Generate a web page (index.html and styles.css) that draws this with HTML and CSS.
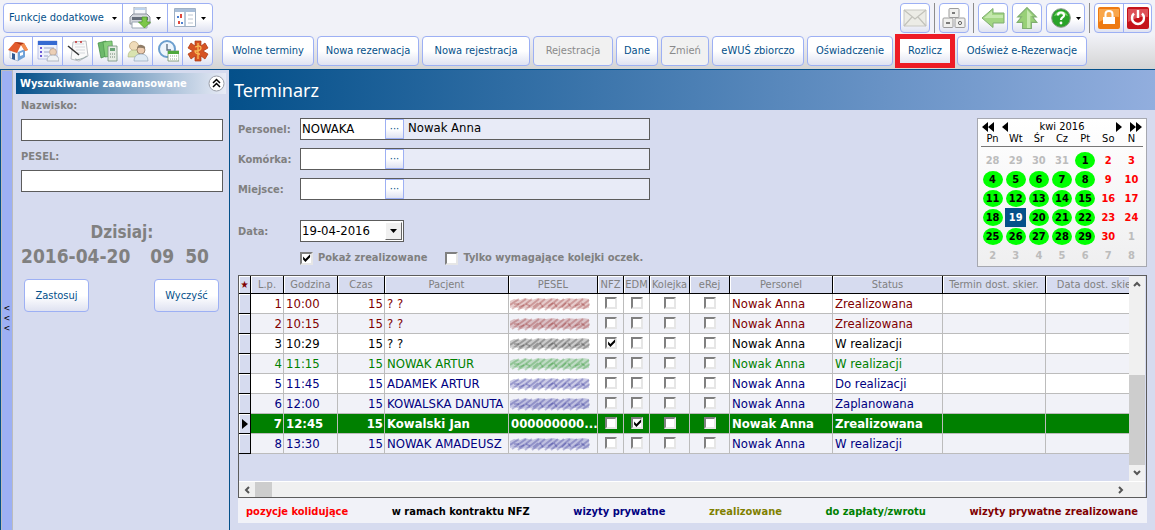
FILE: index.html
```html
<!DOCTYPE html>
<html lang="pl">
<head>
<meta charset="utf-8">
<title>Terminarz</title>
<link rel="stylesheet" href="styles.css">
</head>
<body>
<svg class="defs" aria-hidden="true">
  <symbol id="scribble" viewBox="0 0 80 16">
    <path d="M0 5l4-2 6 1 5-2 7 2 6-2 8 1 7-1 8 2 7-2 8 1 7-1 6 1v9l-6 1-8-1-7 1-8-1-7 1-9-1-8 1-8-1-7 1-7-2-4 1z" fill="currentColor" opacity=".2"/>
    <path d="M0 9L9 3M2 13L16 3M8 14L22 3M15 14L29 3M22 14L35 3M28 14L42 3M35 14L48 3M41 14L54 3M47 14L60 3M53 14L67 3M60 14L73 3M66 14L79 4M73 13L80 8" stroke="currentColor" stroke-width="2" opacity=".24"/>
    <path d="M4 8l5 0M9 11l5-2M16 8l4 2M23 11l5-4M30 7l3 4M38 10l5-3M44 7l3 4M52 11l4-4M58 7l3 4M65 10l5-2M71 7l4 3" stroke="currentColor" stroke-width="1.6" opacity=".24"/>
  </symbol>
  <symbol id="drop" viewBox="0 0 5 3"><path d="M0 0h5L2.500 3z" fill="#000"/></symbol>
</svg>

<header class="toolbar">
  <div class="bar">
    <div class="group">
      <button class="tool menu">Funkcje dodatkowe <svg class="caret"><use href="#drop"/></svg></button>
      <button class="tool split" aria-label="Drukuj">
        <svg class="icon" viewBox="0 0 22 22"><path d="M5 0h12v8H5z" fill="#f6f8fb" stroke="#9aa6b4"/><path d="M6 1h10v2H6z" fill="#bcd3ec"/><path d="M1 10l3-3h14l3 3v7H1z" fill="#d3d6dc" stroke="#8d939d"/><path d="M3 10h16v3H3z" fill="#656d79"/><path d="M3 15h15v6H3z" fill="#fff" stroke="#9aa6b4"/><path d="M13 10h5v5h3.500l-6 6-6-6H13z" fill="#7cc74a" stroke="#4a9527" stroke-width=".7"/></svg>
        <svg class="caret"><use href="#drop"/></svg>
      </button>
      <button class="tool split" aria-label="Widok">
        <svg class="icon" viewBox="0 0 22 22"><path d="M.5 1.500h21v18H.5z" fill="#fff" stroke="#9fb0c4"/><path d="M1 2h20v3H1z" fill="#a9bfd9"/><path d="M10 5h2v14h-2z" fill="#b6c6d8"/><path d="M3 9h2v2H3zM7 15h2v2H7z" fill="#4d7fd0"/><path d="M6 7h2v4H6zM4 14h2v3H4z" fill="#e0473c"/><path d="M14 8h5M14 12h5M14 16h5" stroke="#bcc5d0"/></svg>
        <svg class="caret"><use href="#drop"/></svg>
      </button>
    </div>
    <div class="right">
      <div class="group"><button class="tool sq" aria-label="Poczta"><svg class="icon wide" viewBox="0 0 24 18"><path d="M1 1h22v16H1z" fill="#ecece6" stroke="#c8c8c2"/><path d="M1 1l11 9L23 1M1 17l8-9M23 17l-8-9" fill="none" stroke="#c2c2bb" stroke-width="1.200"/></svg></button></div>
      <span class="rule"></span>
      <div class="group"><button class="tool sq" aria-label="Klawiatura"><svg class="icon wide" viewBox="0 0 24 20"><g fill="#f0f0ee" stroke="#9c9c9c"><rect x="7" y="0.500" width="10" height="9" rx="1"/><rect x="1" y="10" width="10" height="9.500" rx="1"/><rect x="13" y="10" width="10" height="9.500" rx="1"/></g><path d="M10 5h3M4 15h4" stroke="#555" stroke-width="1.500"/><circle cx="18" cy="15" r="1.600" fill="none" stroke="#666"/></svg></button></div>
      <span class="rule"></span>
      <div class="group"><button class="tool sq" aria-label="Wstecz"><svg class="icon wide" viewBox="0 0 24 20"><path d="M1 10L12 .5V5h11v10H12v4.500z" fill="#a3d684" stroke="#7fae70"/><path d="M3 10l8-7v4h11v3z" fill="#c4e8ad"/></svg></button></div>
      <div class="group"><button class="tool sq" aria-label="W górę"><svg class="icon" viewBox="0 0 20 20"><path d="M10 .5L18.500 9H15l4 5h-5v5.500H6V14H1l4-5H1.500z" fill="#98d077" stroke="#7fae70"/><path d="M10 2.500L15 8h-2v11h-3z" fill="#c4e8ad"/></svg></button></div>
      <div class="group"><button class="tool help" aria-label="Pomoc"><svg class="icon" viewBox="0 0 20 20"><circle cx="10" cy="10" r="9.300" fill="#29a329" stroke="#8a978a"/><path d="M3 8a7.500 7.500 0 0 1 14 0q-7-3-14 0" fill="#7bd36a"/><path d="M7 7.500q0-3 3-3t3 2.700q0 1.300-1.500 2.200-1.500 1-1.500 2.600" fill="none" stroke="#fff" stroke-width="2.200"/><circle cx="10" cy="15" r="1.400" fill="#fff"/></svg><svg class="caret"><use href="#drop"/></svg></button></div>
      <span class="rule"></span>
      <div class="group"><button class="tool sq" aria-label="Zablokuj"><svg class="icon big" viewBox="0 0 22 22"><rect width="22" height="22" rx="2" fill="#ee7a12"/><path d="M1 2h20v8Q11 9 1 15z" fill="#f9a64a"/><path d="M7.500 10V7q0-3 3.500-3t3.500 3v3" fill="none" stroke="#fff" stroke-width="2"/><path d="M5 10h12v7H5z" fill="#fff"/></svg></button><button class="tool sq" aria-label="Wyłącz"><svg class="icon big" viewBox="0 0 22 22"><rect width="22" height="22" rx="2" fill="#c5131b"/><path d="M1 2h20v8Q11 9 1 15z" fill="#dd5057"/><path d="M7 6.500a6 6 0 1 0 8 0" fill="none" stroke="#fff" stroke-width="2.400"/><path d="M11 3v8" stroke="#fff" stroke-width="2.400"/></svg></button></div>
    </div>
  </div>
  <div class="bar">
    <div class="group shortcuts">
      <button class="tool sq" aria-label="Start"><svg class="icon" viewBox="0 0 22 22"><path d="M3 10l8 2v9l-8-3z" fill="#f4f6fa" stroke="#8ba3bd" stroke-width=".6"/><path d="M11 12l7-3v8l-7 4z" fill="#6fa2d8"/><path d="M5 13l3 1v6l-3-1z" fill="#315a92"/><path d="M13 13l3-1v3l-3 1z" fill="#fff"/><path d="M8 2l9 1 4 7-3 1-4-6-4 8-9-3z" fill="#e25b2c"/><path d="M8 2l9 1-3 2z" fill="#a93212"/><path d="M14 5l3-2 4 7-3 1z" fill="#f28c4e"/></svg></button>
      <button class="tool sq" aria-label="Rejestr"><svg class="icon" viewBox="0 0 22 22"><path d="M1 1h19v18H1z" fill="#eef1fb" stroke="#9daade" stroke-width=".7"/><path d="M1 1h19v4H1z" fill="#3569d1"/><path d="M3 8h2M3 12h2M3 16h2" stroke="#6c5ad8" stroke-width="2"/><path d="M7 8h10M7 12h5M7 16h4" stroke="#9aa4c9"/><circle cx="16" cy="12" r="3.500" fill="#eccfb6" stroke="#a58e80" stroke-width=".6"/><path d="M10 21q0-6 6-6t6 6z" fill="#eff2f5" stroke="#9ba4b0" stroke-width=".7"/></svg></button>
      <button class="tool sq" aria-label="Notatki"><svg class="icon" viewBox="0 0 22 22"><path d="M6 2l13-1 2 15-9 5-8-2z" fill="#fafafa" stroke="#a9adb3" stroke-width=".8"/><path d="M8 4h9M8 7h10M9 10h9M10 13h8" stroke="#d5d8dd"/><circle cx="9" cy="2" r="1" fill="#c62c2c"/><circle cx="14" cy="2" r="1" fill="#c62c2c"/><path d="M1 6l11 9" stroke="#333" stroke-width="1.600"/><path d="M8 19q4 2 12-3" stroke="#9aa" fill="none"/></svg></button>
      <button class="tool sq" aria-label="Rozliczenia"><svg class="icon" viewBox="0 0 22 22"><path d="M1 3l8-2 3 14-8 3z" fill="#6cb86a" stroke="#3f8a45" stroke-width=".7"/><path d="M6 2l9-1 1 15-8 1z" fill="#88cf7d" stroke="#4b964c" stroke-width=".7"/><path d="M11 6h9v15h-9z" fill="#e7ede5" stroke="#71907a" stroke-width=".8"/><path d="M13 8h5v3h-5z" fill="#6aa577"/><path d="M13 14h5M13 17h5" stroke="#708577" stroke-dasharray="1 1"/></svg></button>
      <button class="tool sq" aria-label="Pacjenci"><svg class="icon" viewBox="0 0 22 22"><circle cx="7" cy="6" r="4.500" fill="#f0dcba" stroke="#b9a07a" stroke-width=".7"/><path d="M1 17q0-7 6-7t6 7z" fill="#d9e3b0" stroke="#a9b27c" stroke-width=".6"/><circle cx="14" cy="10" r="4" fill="#eccbae" stroke="#8b7158" stroke-width=".8"/><path d="M7 21q0-7 7-7t7 7z" fill="#dfeaf4" stroke="#95a9ba" stroke-width=".7"/><path d="M10 8q1-4 5-3t3 4q-3-2-8-1" fill="#8f7c66"/></svg></button>
      <button class="tool sq" aria-label="Grafik"><svg class="icon" viewBox="0 0 22 22"><circle cx="10" cy="9" r="8" fill="#edf5fc" stroke="#6c9fce" stroke-width="2"/><path d="M10 4v6h4" fill="none" stroke="#586b7e" stroke-width="1.300"/><path d="M11 11h11v10H11z" fill="#fff" stroke="#709064" stroke-width=".8"/><path d="M11 11h11v3H11z" fill="#4fa83c"/><path d="M13 16h7M13 19h7" stroke="#93a88c" stroke-dasharray="1 1"/></svg></button>
      <button class="tool sq" aria-label="Medycyna"><svg class="icon" viewBox="0 0 22 22"><path d="M8 1h6v5l4-3 3 5-5 3 5 3-3 5-4-3v5H8v-5l-4 3-3-5 5-3-5-3 3-5 4 3z" fill="#d65423" stroke="#a8350e" stroke-width=".7"/><path d="M11 3v16M8 7q6-2 6 1t-6 3q0 3 5 3" fill="none" stroke="#f8bb55" stroke-width="1.300"/></svg></button>
    </div>
    <nav class="actions">
      <button class="btn w92">Wolne terminy</button>
      <button class="btn w102">Nowa rezerwacja</button>
      <button class="btn w108">Nowa rejestracja</button>
      <button class="btn w80" disabled>Rejestracja</button>
      <button class="btn w42">Dane</button>
      <button class="btn w48" disabled>Zmień</button>
      <button class="btn w92">eWUŚ zbiorczo</button>
      <button class="btn w86">Oświadczenie</button>
      <button class="btn marked">Rozlicz</button>
      <button class="btn w130">Odśwież e-Rezerwacje</button>
    </nav>
  </div>
</header>

<div class="body">
  <button class="strip" aria-label="Zwiń panel"><span>&lt;</span><span>&lt;</span><span>&lt;</span></button>
  <aside class="side">
    <div class="side-head"><h2>Wyszukiwanie zaawansowane</h2>
      <button class="round" aria-label="Zwiń"><svg viewBox="0 0 17 17"><circle cx="8.500" cy="8.500" r="7.500" fill="#fff" stroke="#9a9ea8"/><path d="M5 8l3.500-3.500L12 8M5 12l3.500-3.500L12 12" fill="none" stroke="#000" stroke-width="1.500"/></svg></button>
    </div>
    <form class="search">
      <label for="nazwisko">Nazwisko:</label>
      <input id="nazwisko" type="text">
      <label for="pesel">PESEL:</label>
      <input id="pesel" type="text">
      <div class="today"><p>Dzisiaj:</p><p class="now"><span>2016-04-20</span><span>09</span><span>50</span></p></div>
      <div class="pair"><button type="button" class="btn low">Zastosuj</button><button type="button" class="btn low">Wyczyść</button></div>
    </form>
  </aside>

  <main class="main">
    <h1>Terminarz</h1>
    <div class="content">
      <div class="top">
        <form class="filters">
          <div class="line"><label for="personel">Personel:</label><div class="lookup"><input id="personel" type="text" value="NOWAKA"><button type="button" aria-label="Wybierz personel">···</button><output>Nowak Anna</output></div></div>
          <div class="line"><label for="komorka">Komórka:</label><div class="lookup"><input id="komorka" type="text"><button type="button" aria-label="Wybierz komórkę">···</button><output></output></div></div>
          <div class="line"><label for="miejsce">Miejsce:</label><div class="lookup"><input id="miejsce" type="text"><button type="button" aria-label="Wybierz miejsce">···</button><output></output></div></div>
          <div class="line date"><label for="data">Data:</label><div class="combo"><select id="data"><option>19-04-2016</option></select><span class="knob"><svg viewBox="0 0 7 4"><path d="M0 0h7L3.500 4z"/></svg></span></div></div>
          <div class="checks"><label><input type="checkbox" checked>Pokaż zrealizowane</label><label><input type="checkbox">Tylko wymagające kolejki oczek.</label></div>
        </form>
        <section class="calendar" aria-label="Kalendarz">
          <div class="month">
            <button aria-label="Poprzedni rok"><svg viewBox="0 0 12 10"><path d="M6 0v10L0 5zM12 0v10L6 5z"/></svg></button>
            <button aria-label="Poprzedni miesiąc"><svg class="one" viewBox="0 0 6 10"><path d="M6 0v10L0 5z"/></svg></button>
            <span>kwi 2016</span>
            <button aria-label="Następny miesiąc"><svg class="one" viewBox="0 0 6 10"><path d="M0 0v10l6-5z"/></svg></button>
            <button aria-label="Następny rok"><svg viewBox="0 0 12 10"><path d="M0 0v10l6-5zM6 0v10l6-5z"/></svg></button>
          </div>
          <table class="days">
            <thead><tr><th>Pn</th><th>Wt</th><th>Śr</th><th>Cz</th><th>Pt</th><th>So</th><th>N</th></tr></thead>
            <tbody>
              <tr><td class="off">28</td><td class="off">29</td><td class="off">30</td><td class="off">31</td><td><b>1</b></td><td class="free">2</td><td class="free">3</td></tr>
              <tr><td><b>4</b></td><td><b>5</b></td><td><b>6</b></td><td><b>7</b></td><td><b>8</b></td><td class="free">9</td><td class="free">10</td></tr>
              <tr><td><b>11</b></td><td><b>12</b></td><td><b>13</b></td><td><b>14</b></td><td><b>15</b></td><td class="free">16</td><td class="free">17</td></tr>
              <tr><td><b>18</b></td><td><b class="sel">19</b></td><td><b>20</b></td><td><b>21</b></td><td><b>22</b></td><td class="free">23</td><td class="free">24</td></tr>
              <tr><td><b>25</b></td><td><b>26</b></td><td><b>27</b></td><td><b>28</b></td><td><b>29</b></td><td class="free">30</td><td class="off">1</td></tr>
              <tr><td class="off">2</td><td class="off">3</td><td class="off">4</td><td class="off">5</td><td class="off">6</td><td class="off">7</td><td class="off">8</td></tr>
            </tbody>
          </table>
        </section>
      </div>

      <div class="gridbox">
        <div class="viewport">
          <table class="grid">
            <colgroup><col class="c12"><col class="c33"><col class="c54"><col class="c47"><col class="c124"><col class="c89"><col class="c26"><col class="c26"><col class="c40"><col class="c40"><col class="c103"><col class="c110"><col class="c103"><col class="c103"></colgroup>
            <thead><tr><th class="star">★</th><th>L.p.</th><th>Godzina</th><th>Czas</th><th>Pacjent</th><th>PESEL</th><th>NFZ</th><th>EDM</th><th>Kolejka</th><th>eRej</th><th>Personel</th><th>Status</th><th>Termin dost. skier.</th><th>Data dost. skier.</th></tr></thead>
            <tbody>
              <tr class="maroon"><td class="mark"></td><td class="num">1</td><td>10:00</td><td class="num">15</td><td>? ?</td><td><svg class="hid"><use href="#scribble"/></svg></td><td class="chk"><input type="checkbox" aria-label="NFZ"></td><td class="chk"><input type="checkbox" aria-label="EDM"></td><td class="chk"><input type="checkbox" aria-label="Kolejka"></td><td class="chk"><input type="checkbox" aria-label="eRej"></td><td>Nowak Anna</td><td>Zrealizowana</td><td></td><td></td></tr>
              <tr class="maroon"><td class="mark"></td><td class="num">2</td><td>10:15</td><td class="num">15</td><td>? ?</td><td><svg class="hid"><use href="#scribble"/></svg></td><td class="chk"><input type="checkbox" aria-label="NFZ"></td><td class="chk"><input type="checkbox" aria-label="EDM"></td><td class="chk"><input type="checkbox" aria-label="Kolejka"></td><td class="chk"><input type="checkbox" aria-label="eRej"></td><td>Nowak Anna</td><td>Zrealizowana</td><td></td><td></td></tr>
              <tr class="black"><td class="mark"></td><td class="num">3</td><td>10:29</td><td class="num">15</td><td>? ?</td><td><svg class="hid"><use href="#scribble"/></svg></td><td class="chk"><input type="checkbox" checked aria-label="NFZ"></td><td class="chk"><input type="checkbox" aria-label="EDM"></td><td class="chk"><input type="checkbox" aria-label="Kolejka"></td><td class="chk"><input type="checkbox" aria-label="eRej"></td><td>Nowak Anna</td><td>W realizacji</td><td></td><td></td></tr>
              <tr class="green"><td class="mark"></td><td class="num">4</td><td>11:15</td><td class="num">15</td><td>NOWAK ARTUR</td><td><svg class="hid"><use href="#scribble"/></svg></td><td class="chk"><input type="checkbox" aria-label="NFZ"></td><td class="chk"><input type="checkbox" aria-label="EDM"></td><td class="chk"><input type="checkbox" aria-label="Kolejka"></td><td class="chk"><input type="checkbox" aria-label="eRej"></td><td>Nowak Anna</td><td>W realizacji</td><td></td><td></td></tr>
              <tr class="navy"><td class="mark"></td><td class="num">5</td><td>11:45</td><td class="num">15</td><td>ADAMEK ARTUR</td><td><svg class="hid"><use href="#scribble"/></svg></td><td class="chk"><input type="checkbox" aria-label="NFZ"></td><td class="chk"><input type="checkbox" aria-label="EDM"></td><td class="chk"><input type="checkbox" aria-label="Kolejka"></td><td class="chk"><input type="checkbox" aria-label="eRej"></td><td>Nowak Anna</td><td>Do realizacji</td><td></td><td></td></tr>
              <tr class="navy"><td class="mark"></td><td class="num">6</td><td>12:00</td><td class="num">15</td><td>KOWALSKA DANUTA</td><td><svg class="hid"><use href="#scribble"/></svg></td><td class="chk"><input type="checkbox" aria-label="NFZ"></td><td class="chk"><input type="checkbox" aria-label="EDM"></td><td class="chk"><input type="checkbox" aria-label="Kolejka"></td><td class="chk"><input type="checkbox" aria-label="eRej"></td><td>Nowak Anna</td><td>Zaplanowana</td><td></td><td></td></tr>
              <tr class="current"><td class="mark"><svg class="pointer" viewBox="0 0 6 10"><path d="M0 0v10l6-5z"/></svg></td><td class="num">7</td><td>12:45</td><td class="num">15</td><td>Kowalski Jan</td><td>000000000...</td><td class="chk"><input type="checkbox" aria-label="NFZ"></td><td class="chk"><input type="checkbox" checked aria-label="EDM"></td><td class="chk"><input type="checkbox" aria-label="Kolejka"></td><td class="chk"><input type="checkbox" aria-label="eRej"></td><td>Nowak Anna</td><td>Zrealizowana</td><td></td><td></td></tr>
              <tr class="navy"><td class="mark"></td><td class="num">8</td><td>13:30</td><td class="num">15</td><td>NOWAK AMADEUSZ</td><td><svg class="hid"><use href="#scribble"/></svg></td><td class="chk"><input type="checkbox" aria-label="NFZ"></td><td class="chk"><input type="checkbox" aria-label="EDM"></td><td class="chk"><input type="checkbox" aria-label="Kolejka"></td><td class="chk"><input type="checkbox" aria-label="eRej"></td><td>Nowak Anna</td><td>W realizacji</td><td></td><td></td></tr>
            </tbody>
          </table>
        </div>
        <div class="vscroll">
          <button aria-label="W górę"><svg viewBox="0 0 8 6"><path d="M1 5l3-3 3 3"/></svg></button>
          <div class="track"><div class="thumb"></div></div>
          <button aria-label="W dół"><svg viewBox="0 0 8 6"><path d="M1 1l3 3 3-3"/></svg></button>
        </div>
        <div class="hscroll">
          <button aria-label="W lewo"><svg viewBox="0 0 6 8"><path d="M5 1L2 4l3 3"/></svg></button>
          <div class="track"><div class="thumb"></div></div>
          <button aria-label="W prawo"><svg viewBox="0 0 6 8"><path d="M1 1l3 3-3 3"/></svg></button>
        </div>
      </div>
      <footer class="legend">
        <span class="red">pozycje kolidujące</span><span class="black">w ramach kontraktu NFZ</span><span class="navy">wizyty prywatne</span><span class="olive">zrealizowane</span><span class="green">do zapłaty/zwrotu</span><span class="maroon">wizyty prywatne zrealizowane</span>
      </footer>
    </div>
  </main>
</div>
</body>
</html>
```
FILE: styles.css
```css
* { box-sizing: border-box; }
body { margin: 0; min-height: 100vh; display: flex; flex-direction: column; font: 13px/16px "DejaVu Sans Condensed", "Noto Sans", sans-serif; color: #000; background: #d6dbef; }
button, input, select { font: inherit; color: inherit; margin: 0; padding: 0; }
button { border: 0; background: none; }
h1, h2, p { margin: 0; }
.defs { position: absolute; width: 0; height: 0; }

/* toolbar */
.toolbar { display: flex; flex-direction: column; gap: 3px; padding: 3px; background: linear-gradient(#f1f2f8 50%, #d4d4d4); }
.bar { display: flex; justify-content: space-between; height: 30px; }
.bar + .bar { justify-content: flex-start; gap: 9px; }
.group { display: flex; border: 1px solid #9db0f4; border-radius: 4px; background: linear-gradient(#fff 55%, #dfe2f1); }
.tool, .btn { color: #04508a; white-space: nowrap; font-family: "DejaVu Sans Condensed", "Noto Sans", sans-serif; font-size: 11px; }
.tool { display: flex; align-items: center; justify-content: center; gap: 6px; }
.tool + .tool { border-left: 1px solid #9db0f4; }
.menu { width: 118px; gap: 8px; }
.split { width: 45px; }
.sq { width: 28px; }
.help { width: 37px; }
.shortcuts .sq { width: 30px; }
.shortcuts .sq:first-child { width: 28px; }
.icon { width: 22px; height: 22px; flex: none; }
.icon.wide { width: 24px; height: 20px; }
.help .icon { width: 20px; height: 20px; }
.split, .help { gap: 5px; }
.caret { width: 5px; height: 3px; flex: none; }
.right { display: flex; gap: 4px; }
.rule { width: 1px; background: #8c8c8c; }
.actions { display: flex; gap: 3px; }
.btn { height: 30px; border: 1px solid #9db0f4; border-radius: 4px; background: linear-gradient(#fff 50%, #dfe2f1); }
.btn:disabled { background: #f1f1f1; color: #8a8a8a; }
.marked { width: 56px; margin: 0 1px; outline: 5px solid #ee1c25; outline-offset: -3px; border-radius: 0; }
.w92 { width: 92px; } .w102 { width: 102px; } .w108 { width: 108px; } .w80 { width: 80px; } .w42 { width: 42px; }
.w48 { width: 48px; } .w86 { width: 86px; } .w130 { width: 130px; }

/* side panel */
.body { flex: 1; display: flex; border-top: 1px solid #04508a; border-left: 1px solid #04508a; }
.strip { width: 12px; flex: none; display: flex; flex-direction: column; align-items: center; justify-content: center; padding-top: 34px; background: #9db0f4; border: 1px solid #bcbcbc; border-bottom: 0; font-size: 9px; line-height: 10px; }
.side { width: 217px; flex: none; padding: 3px; border-right: 1px solid #04508a; }
.side-head { display: flex; align-items: center; justify-content: space-between; height: 21px; padding: 0 1px 0 4px; background: linear-gradient(90deg, #04508a, #e8ebf6); }
h2 { color: #fff; font-size: 11px; font-weight: bold; }
.round, .round svg { display: block; width: 17px; height: 17px; }
.search { display: flex; flex-direction: column; padding: 4px 3px 0 5px; }
.search label { margin: 0 0 5px; color: #808080; font-weight: bold; font-size: 11px; line-height: 16px; }
.search input { height: 22px; border: 1px solid #5c5c5c; background: #fff; margin-bottom: 8px; padding: 0 3px; }
.today { margin-top: 20px; color: #808080; font-weight: bold; font-size: 17px; line-height: 24px; text-align: center; }
.now { display: flex; font-size: 19px; justify-content: flex-start; }
.now span:nth-child(2) { margin: 0 11px 0 20px; }
.pair { display: flex; justify-content: space-between; padding: 11px 4px 0 3px; }
.low { width: 65px; height: 33px; }

/* main */
.main { flex: 1; min-width: 0; display: flex; flex-direction: column; }
h1 { height: 40px; padding-left: 4px; font: 18px/40px "Noto Sans", sans-serif; color: #fff; background: linear-gradient(90deg, #04508a, #92aede); }
.content { flex: 1; display: flex; flex-direction: column; padding: 8px 8px 7px; }
.top { display: flex; justify-content: space-between; align-items: flex-start; margin-bottom: 8px; }
.filters { width: 412px; display: flex; flex-direction: column; gap: 8px; }
.line { display: flex; align-items: center; height: 22px; }
.line label, .checks label { color: #808080; font-weight: bold; font-size: 11px; }
.line > label { width: 62px; flex: none; padding-top: 1px; }
.lookup { flex: 1; display: flex; height: 22px; border: 1px solid #5c5c5c; background: #e8ebf7; }
.lookup input { width: 84px; border: 0; padding: 0 1px; background: #fff; }
.lookup button { width: 19px; border: 1px solid #9db0f4; background: linear-gradient(#fff 50%, #dfe2f1); color: #04508a; line-height: 12px; font-size: 11px; }
.lookup output { padding-left: 4px; line-height: 18px; }
.date { margin-top: 12px; }
.combo { position: relative; width: 104px; height: 22px; border: 1px solid #5c5c5c; background: #fff; }
.combo select { appearance: none; width: 100%; height: 20px; border: 0; background: #fff; padding: 0 1px; }
.knob { position: absolute; top: 1px; right: 1px; width: 17px; height: 18px; display: grid; place-items: center; background: #f0f0f0; border: 1px solid; border-color: #fff #666 #666 #fff; pointer-events: none; }
.knob svg { width: 7px; height: 4px; }
.checks { display: flex; gap: 18px; padding-left: 62px; }
.checks label { display: flex; align-items: center; gap: 5px; white-space: nowrap; }
input[type="checkbox"] { appearance: none; display: block; width: 13px; height: 13px; flex: none; background: #fff; border: 2px solid; border-color: #808080 #e6e6e6 #e6e6e6 #808080; }
input[type="checkbox"]:checked::before { content: ""; display: block; width: 9px; height: 9px; background: #000; clip-path: polygon(12% 34%, 38% 60%, 90% 8%, 90% 42%, 38% 94%, 12% 68%); }

/* calendar */
.calendar { width: 170px; padding: 2px 3px 1px; border: 1px solid #a6a8b0; background: linear-gradient(#fff, #efeff0); font-size: 11px; }
.month { display: flex; align-items: center; gap: 8px; height: 12px; padding: 0 1px; line-height: 12px; }
.month span { flex: 1; text-align: center; }
.month svg { display: block; width: 12px; height: 10px; }
.month svg.one { width: 6px; }
.days { width: 100%; table-layout: fixed; border-collapse: collapse; }
.days th { font-weight: normal; height: 13px; padding: 0 0 1px; line-height: 11px; border-bottom: 1px solid #777; }
.days td { height: 19px; padding: 0; font-weight: bold; text-align: center; line-height: 17px; }
.days tbody::before { content: ""; display: table-row; height: 5px; }
.days b { display: block; width: 20px; height: 17px; margin: auto; border-radius: 50%; background: #0f0; }
.days b.sel { border-radius: 0; width: 21px; height: 19px; line-height: 19px; color: #fff; background: #04508a; }
.off { color: #bcbcbc; } .free { color: #f00; }

/* schedule grid */
.gridbox { flex: 1; display: grid; grid-template: 1fr 16px / minmax(0, 1fr) 16px; padding-right: 1px; border: 1px solid #5c5c5c; background: #d6dbef; }
.viewport { overflow: hidden; }
.grid { width: 910px; table-layout: fixed; border-collapse: separate; border-spacing: 0; }
.c12 { width: 12px; } .c33 { width: 33px; } .c54 { width: 54px; } .c47 { width: 47px; } .c124 { width: 124px; } .c89 { width: 89px; } .c26 { width: 26px; }
.c40 { width: 40px; } .c103 { width: 103px; } .c110 { width: 110px; }
.grid th { height: 18px; padding: 0; border: 1px solid #000; border-width: 0 1px 1px 0; box-shadow: inset 1px 1px #fff; color: #808080; font-size: 11px; font-weight: normal; line-height: 17px; white-space: nowrap; }
.grid th.star { color: #800000; font-size: 10px; }
.grid td { height: 20px; padding: 0 1px 0 2px; border: 1px solid #bcbcbc; border-width: 0 1px 1px 0; background: #fff; line-height: 19px; white-space: nowrap; overflow: hidden; }
.grid tr:nth-child(even) td { background: #f1f2f8; }
.grid tr td.mark { padding: 0; background: #d6dbef; border-color: #000; box-shadow: inset 1px 1px #fff; }
.grid .num { text-align: right; }
.grid .chk input { margin: -2px auto 0; width: 12px; height: 12px; }
.grid tr.current td:not(.mark) { background: #008000; color: #fff; font-weight: bold; }
.hid { display: block; width: 80px; height: 16px; margin-left: -1px; }
.pointer { display: block; width: 6px; height: 10px; margin-left: 3px; }
.maroon { color: #800000; } .navy { color: #000080; } .green { color: #008000; } .black { color: #000; } .olive { color: #808000; } .red { color: #f00; }

.vscroll, .hscroll { display: flex; background: #f0f0f0; }
.vscroll { flex-direction: column; }
.hscroll { grid-column: 1 / 3; padding-right: 16px; border-top: 1px solid #fff; }
.vscroll button, .hscroll button { flex: none; display: grid; place-items: center; width: 16px; height: 16px; }
.vscroll svg { width: 8px; height: 6px; } .hscroll svg { width: 6px; height: 8px; }
.vscroll path, .hscroll path { fill: none; stroke: #555; stroke-width: 2; }
.track { flex: 1; display: flex; }
.vscroll .track { flex-direction: column; justify-content: flex-end; }
.vscroll .thumb { height: 52%; }
.hscroll .thumb { width: 17px; }
.thumb { background: #cdcdcd; }
.legend { display: flex; justify-content: space-between; padding: 6px 9px 3px 8px; background: #f1f2f8; font-weight: bold; font-size: 11px; white-space: nowrap; }
```
